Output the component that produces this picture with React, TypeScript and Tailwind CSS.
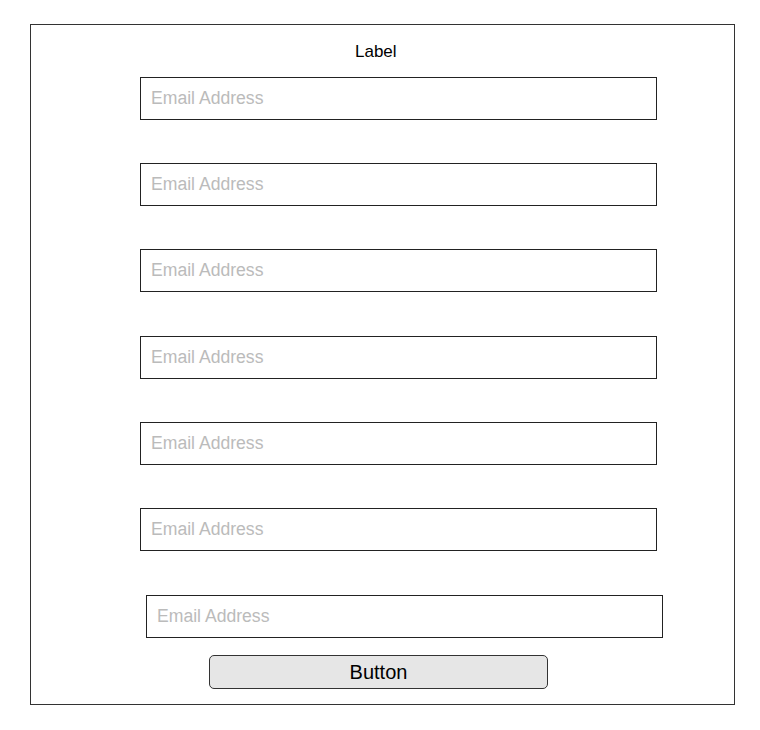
const fields = [
  { ml: 'ml-[109px]', mt: 'mt-[17px]' },
  { ml: 'ml-[109px]', mt: 'mt-[43px]' },
  { ml: 'ml-[109px]', mt: 'mt-[43px]' },
  { ml: 'ml-[109px]', mt: 'mt-[44px]' },
  { ml: 'ml-[109px]', mt: 'mt-[43px]' },
  { ml: 'ml-[109px]', mt: 'mt-[43px]' },
  { ml: 'ml-[115px]', mt: 'mt-[44px]' },
];

const App = () => {
  return (
    <div className="bg-white w-[760px] h-[730px] pt-[24px] pl-[30px] font-['Liberation_Sans',Arial,sans-serif]">
      {/* Form frame */}
      <div className="w-[705px] h-[681px] border border-[#333333] flex flex-col">
        <div className="mt-[17px] h-[18px] leading-[20px] ml-[324px] text-[17px] text-black">Label</div>
        {fields.map((f, i) => (
          <input
            key={i}
            type="email"
            placeholder="Email Address"
            className={`${f.ml} ${f.mt} w-[517px] h-[43px] shrink-0 border border-[#222222] bg-white px-[10px] text-[17.6px] text-black placeholder:text-[#bbbbbb] outline-none`}
          />
        ))}
        <button className="ml-[178px] mt-[17px] w-[339px] h-[34px] shrink-0 rounded-[5px] border border-[#333333] bg-[#e6e6e6] text-[20px] text-black leading-none">
          Button
        </button>
      </div>
    </div>
  );
};

export default App;
